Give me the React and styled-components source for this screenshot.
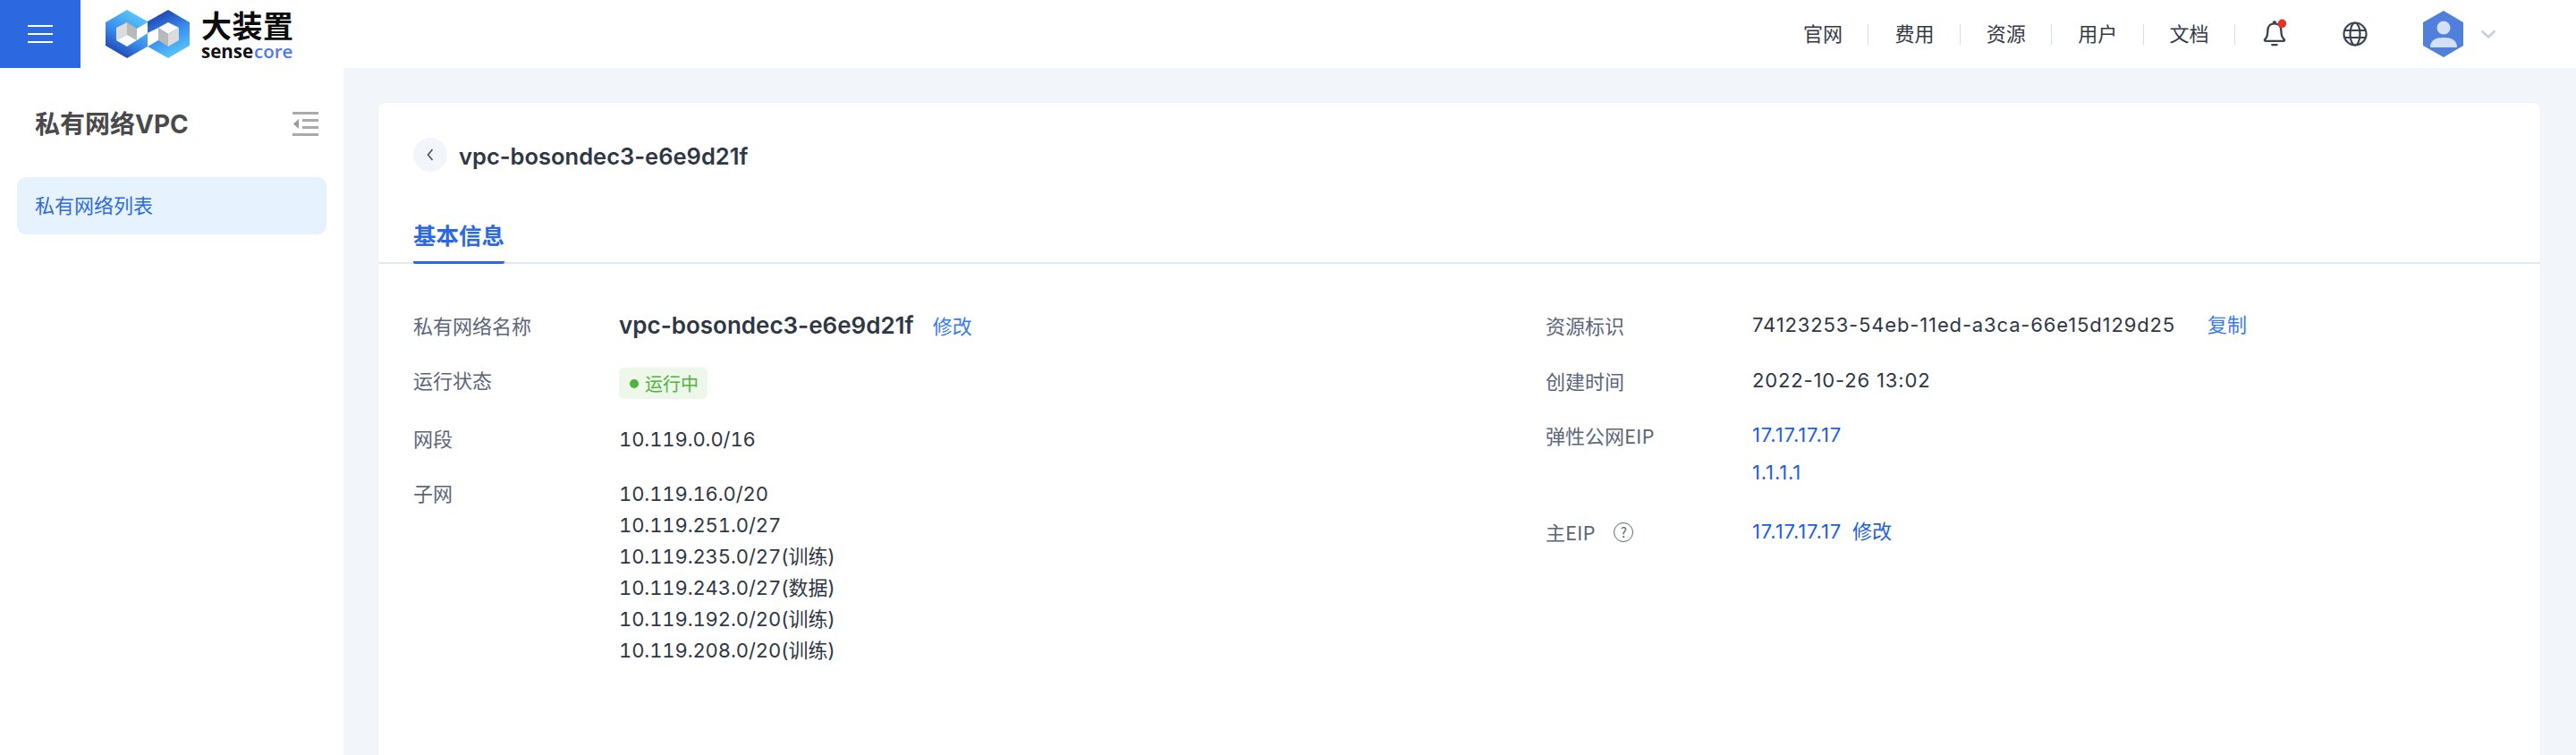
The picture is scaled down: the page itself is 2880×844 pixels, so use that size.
import React from "react";
import styled, { createGlobalStyle } from "styled-components";

const Global = createGlobalStyle`
  html, body { margin: 0; padding: 0; background: #f2f5f9; }
  body { font-family: Inter, "Noto Sans CJK SC", sans-serif; color: #2f3744; }
  * { box-sizing: border-box; }
`;

const Page = styled.div`
  width: 2880px; height: 844px; overflow: hidden;
  display: flex; flex-direction: column;
`;
const Header = styled.header`
  height: 76px; flex: none; background: #fff;
  display: flex; align-items: center;
`;
const MenuButton = styled.div`
  width: 90px; height: 76px; background: #2c68e0;
  display: flex; flex-direction: column; align-items: center; justify-content: center; gap: 7px;
`;
const MenuBar = styled.span`
  width: 28px; height: 2px; background: #fff; display: block;
`;
const Logo = styled.div`
  margin-left: 28px; display: flex; align-items: center; gap: 13px; height: 76px;
`;
const LogoText = styled.div`
  display: flex; flex-direction: column; width: 104px; height: 54px; justify-content: space-between;
`;
const LogoCn = styled.div`
  font-family: "Noto Sans CJK SC", sans-serif; font-weight: 700; font-size: 34px; line-height: 34px; color: #0c0c0c;
  letter-spacing: 0.5px;
`;
const LogoEn = styled.div`
  font-family: "Open Sans", sans-serif; font-weight: 700; font-size: 20.5px; line-height: 16px; color: #111;
  white-space: nowrap;
`;
const LogoCore = styled.span`
  color: #4d78f0; margin-left: 1px; font-weight: 600;
`;
const Nav = styled.nav`
  margin-left: auto; display: flex; align-items: center;
`;
const NavItem = styled.a`
  font-size: 22px; line-height: 19px; color: #333a46; padding: 0 29px 4px; width: 102.4px; white-space: nowrap;
  border-right: 1px solid #d5dde8; font-family: "Noto Sans CJK SC", sans-serif;
`;
const IconSlot = styled.div`
  display: flex; align-items: center; justify-content: center; height: 76px;
  margin-left: ${p => p.$ml}px; width: ${p => p.$w}px;
`;
const UserArea = styled.div`
  display: flex; align-items: center; gap: 18px; margin-left: 62px; margin-right: 89px;
`;
const Main = styled.div`
  flex: 1; display: flex; min-height: 0;
`;
const Sidebar = styled.aside`
  width: 384px; flex: none; background: #fff; padding: 0 19px;
`;
const SideHead = styled.div`
  height: 122px; padding: 0 8px 0 20px; display: flex; align-items: center; justify-content: space-between;
`;
const SideTitle = styled.h2`
  margin: 0; font-size: 28px; font-weight: 700; color: #4a4a4a;
`;
const SideItem = styled.div`
  height: 64px; border-radius: 10px; background: #e6f3fe; color: #2f6bdf;
  font-size: 22px; padding: 0 0 4px 20px; display: flex; align-items: center;
`;
const Content = styled.main`
  flex: 1; padding: 39px 40px 0 39px; min-width: 0;
`;
const Card = styled.section`
  height: 900px; background: #fff; border-radius: 8px; box-shadow: 0 0 2px #e4e8f6;
`;
const TitleRow = styled.div`
  padding: 39px 39px 0; display: flex; align-items: flex-start; gap: 13px;
`;
const BackButton = styled.div`
  width: 38px; height: 38px; border-radius: 50%; background: #f2f5f9;
  display: flex; align-items: center; justify-content: center;
`;
const Title = styled.h1`
  margin: 0; font-size: 25.5px; line-height: 41px; font-weight: 600; color: #2f3744;
`;
const Tabs = styled.div`
  margin-top: 45px; height: 55px; padding: 0 39px; border-bottom: 2px solid #e2e8f2; display: flex;
`;
const Tab = styled.div`
  height: 55px; font-weight: 600; color: #2c68e0; line-height: 43px;
  border-bottom: 3px solid #2c68e0; font-family: "Noto Sans CJK SC", sans-serif;
  border-radius: 0 0 2px 2px; font-size: 25.5px; white-space: nowrap;
`;
const Details = styled.div`
  display: grid; grid-template-columns: 1266px 1fr; padding: 51px 0 0 39px;
`;
const Column = styled.div`
  display: flex; flex-direction: column;
`;
const Row = styled.div`
  display: grid; grid-template-columns: ${p => p.$label || 230}px 1fr;
  margin-top: ${p => p.$mt || 0}px; align-items: start;
`;
const Label = styled.div`
  font-size: 22px; line-height: 35px; color: #5a6679; font-family: "Noto Sans CJK SC", sans-serif;
  display: flex; align-items: center; gap: 21px;
`;
const Value = styled.div`
  font-size: 22px; line-height: 35px; color: #2f3744; white-space: nowrap;
  font-variant-numeric: tabular-nums; letter-spacing: -0.1px;
`;
const NameRowValue = styled.div`
  font-size: 22px; line-height: 35px; color: #2f3744; white-space: nowrap;
`;
const NetValue = styled(Value)`
  padding-top: 2px;
`;
const PlainValue = styled.div`
  font-size: 22px; line-height: 35px; color: #2f3744; white-space: nowrap;
  letter-spacing: 0.85px;
`;
const NameValue = styled.span`
  font-size: 26px; font-weight: 600; color: #2f3744;
`;
const Action = styled.a`
  color: ${p => p.$dark ? "#1f5fdc" : "#3a7bea"}; margin-left: ${p => p.$ml}px; letter-spacing: 0;
`;
const IpLink = styled.a`
  color: #1f5fdc; display: block; margin-top: ${p => p.$mt || 0}px;
`;
const IpInline = styled.a`
  color: #1f5fdc;
`;
const Tag = styled.span`
  display: inline-flex; align-items: center; gap: 7px; height: 35px; padding: 0 10px 0 12px; margin-top: 4px;
  background: #edf7ea; border-radius: 6px; color: #52b23e; font-size: 20px; letter-spacing: 0;
  font-family: "Noto Sans CJK SC", sans-serif;
`;
const Dot = styled.i`
  width: 10px; height: 10px; border-radius: 50%; background: #4fb33c; display: block;
`;
const SubnetList = styled.div`
  display: flex; flex-direction: column; padding-top: 2px;
`;
const Help = styled.span`
  width: 22px; height: 22px; border-radius: 50%; border: 1.5px solid #5a6679; color: #5a6679;
  display: inline-flex; align-items: center; justify-content: center; font-size: 15px; line-height: 1;
`;
const CollapseIconWrap = styled.div`
  padding-top: 4px;
`;

const LogoMark = () => (
  <svg width="94" height="54" viewBox="0 0 94 54">
    <defs>
      <linearGradient id="lg1" x1="0.8" y1="0.05" x2="0.3" y2="1">
        <stop offset="0" stopColor="#5ccdfa" />
        <stop offset="0.55" stopColor="#3a8eee" />
        <stop offset="1" stopColor="#1c3fae" />
      </linearGradient>
      <linearGradient id="lg2" x1="0.3" y1="0" x2="0.7" y2="1">
        <stop offset="0" stopColor="#1c3fae" />
        <stop offset="0.5" stopColor="#3a8eee" />
        <stop offset="1" stopColor="#5ccdfa" />
      </linearGradient>
    </defs>
    <polygon points="24,0 47,13 47,41 24,54 0,40 0,14" fill="url(#lg1)" />
    <polygon points="70,0 94,14 94,40 70,54 47,41 47,13" fill="url(#lg2)" />
    <polygon points="35,21 47,14 47,26 35,34" fill="#fff" />
    <polygon points="47,26 59,20 59,34 47,41" fill="#fff" />
    <polygon points="12,20 24,14 24,28 12,34" fill="#dcdcdc" />
    <polygon points="24,14 35,21 35,34 24,28" fill="#b9b9b9" />
    <polygon points="12,34 24,28 35,34 24,41" fill="#fff" />
    <polygon points="59,20 70,14 82,20 70,27" fill="#fff" />
    <polygon points="59,20 70,27 70,41 59,34" fill="#b9b9b9" />
    <polygon points="70,27 82,20 82,34 70,41" fill="#dcdcdc" />
  </svg>
);

const CollapseIcon = () => (
  <CollapseIconWrap>
    <svg width="30" height="28" viewBox="0 0 30 28" style={{ display: "block" }}>
      <rect x="0" y="0" width="29" height="3" fill="#aaa" />
      <rect x="11" y="8" width="18" height="3" fill="#aaa" />
      <rect x="11" y="16" width="18" height="3" fill="#aaa" />
      <rect x="0" y="24" width="29" height="3" fill="#aaa" />
      <polygon points="7,8 7,19 1,13.500" fill="#999" />
    </svg>
  </CollapseIconWrap>
);

const BellIcon = () => (
  <svg width="30" height="36" viewBox="0 0 28 34" style={{ display: "block", flex: "none" }}>
    <path d="M3 22.500c2.200-2 2.800-4.500 2.800-9C5.800 9 8.500 6 13 6s7 3 7 7.500c0 4.500 .7 7 3 9 .9.800.5 2-.8 2H4c-1.400 0-1.900-1.200-1-2z" fill="none" stroke="#3b4350" strokeWidth="2.200" strokeLinejoin="round" />
    <rect x="11" y="3" width="4" height="3" rx="1.500" fill="#3b4350" />
    <path d="M10.500 28.500h5" stroke="#3b4350" strokeWidth="2.200" strokeLinecap="round" />
    <circle cx="21" cy="6" r="4.500" fill="#e8321e" />
  </svg>
);

const GlobeIcon = () => (
  <svg width="28" height="28" viewBox="0 0 28 28" style={{ display: "block" }} fill="none" stroke="#3b4350" strokeWidth="2.200">
    <circle cx="14" cy="14" r="12.500" />
    <ellipse cx="14" cy="14" rx="5.500" ry="12.500" />
    <path d="M2 10h24M2 18h24" />
  </svg>
);

const Avatar = () => (
  <svg width="46" height="52" viewBox="0 0 46 52" style={{ display: "block" }}>
    <polygon points="23,0 45,13 45,39 23,52 0,39 0,13" fill="#5080dc" />
    <circle cx="23" cy="19" r="7.500" fill="#d3e0f7" />
    <path d="M8 41c0-8 6-11 15-11s15 3 15 11z" fill="#d3e0f7" />
  </svg>
);

const Chevron = () => (
  <svg width="18" height="10" viewBox="0 0 18 10" style={{ display: "block" }}>
    <path d="M1.500 1.500L9 8.500l7.500-7" fill="none" stroke="#c5cede" strokeWidth="2.400" />
  </svg>
);

const BackIcon = () => (
  <svg width="10" height="16" viewBox="0 0 10 16" style={{ display: "block" }}>
    <path d="M7.500 2L2.500 8l5 6" fill="none" stroke="#4a5260" strokeWidth="1.600" />
  </svg>
);

const navItems = ["官网", "费用", "资源", "用户", "文档"];
const subnets = [
  "10.119.16.0/20",
  "10.119.251.0/27",
  "10.119.235.0/27(训练)",
  "10.119.243.0/27(数据)",
  "10.119.192.0/20(训练)",
  "10.119.208.0/20(训练)",
];

export default function App() {
  return (
    <Page>
      <Global />
      <Header>
        <MenuButton><MenuBar /><MenuBar /><MenuBar /></MenuButton>
        <Logo>
          <LogoMark />
          <LogoText>
            <LogoCn>大装置</LogoCn>
            <LogoEn>sense<LogoCore>core</LogoCore></LogoEn>
          </LogoText>
        </Logo>
        <Nav>
          {navItems.map(t => <NavItem key={t}>{t}</NavItem>)}
        </Nav>
        <IconSlot $ml={31} $w={28}><BellIcon /></IconSlot>
        <IconSlot $ml={61} $w={28}><GlobeIcon /></IconSlot>
        <UserArea><Avatar /><Chevron /></UserArea>
      </Header>
      <Main>
        <Sidebar>
          <SideHead>
            <SideTitle>私有网络VPC</SideTitle>
            <CollapseIcon />
          </SideHead>
          <SideItem>私有网络列表</SideItem>
        </Sidebar>
        <Content>
          <Card>
            <TitleRow>
              <BackButton><BackIcon /></BackButton>
              <Title>vpc-bosondec3-e6e9d21f</Title>
            </TitleRow>
            <Tabs><Tab>基本信息</Tab></Tabs>
            <Details>
              <Column>
                <Row>
                  <Label>私有网络名称</Label>
                  <NameRowValue><NameValue>vpc-bosondec3-e6e9d21f</NameValue><Action $ml={21}>修改</Action></NameRowValue>
                </Row>
                <Row $mt={24}>
                  <Label>运行状态</Label>
                  <Value><Tag><Dot />运行中</Tag></Value>
                </Row>
                <Row $mt={26}>
                  <Label>网段</Label>
                  <NetValue>10.119.0.0/16</NetValue>
                </Row>
                <Row $mt={24}>
                  <Label>子网</Label>
                  <SubnetList>
                    {subnets.map(s => <Value key={s}>{s}</Value>)}
                  </SubnetList>
                </Row>
              </Column>
              <Column>
                <Row $label={231}>
                  <Label>资源标识</Label>
                  <PlainValue>74123253-54eb-11ed-a3ca-66e15d129d25<Action $ml={36}>复制</Action></PlainValue>
                </Row>
                <Row $label={231} $mt={27}>
                  <Label>创建时间</Label>
                  <PlainValue>2022-10-26 13:02</PlainValue>
                </Row>
                <Row $label={231} $mt={26}>
                  <Label>弹性公网EIP</Label>
                  <PlainValue>
                    <IpLink>17.17.17.17</IpLink>
                    <IpLink $mt={7}>1.1.1.1</IpLink>
                  </PlainValue>
                </Row>
                <Row $label={231} $mt={31}>
                  <Label>主EIP<Help>?</Help></Label>
                  <PlainValue><IpInline>17.17.17.17</IpInline><Action $dark $ml={12}>修改</Action></PlainValue>
                </Row>
              </Column>
            </Details>
          </Card>
        </Content>
      </Main>
    </Page>
  );
}
